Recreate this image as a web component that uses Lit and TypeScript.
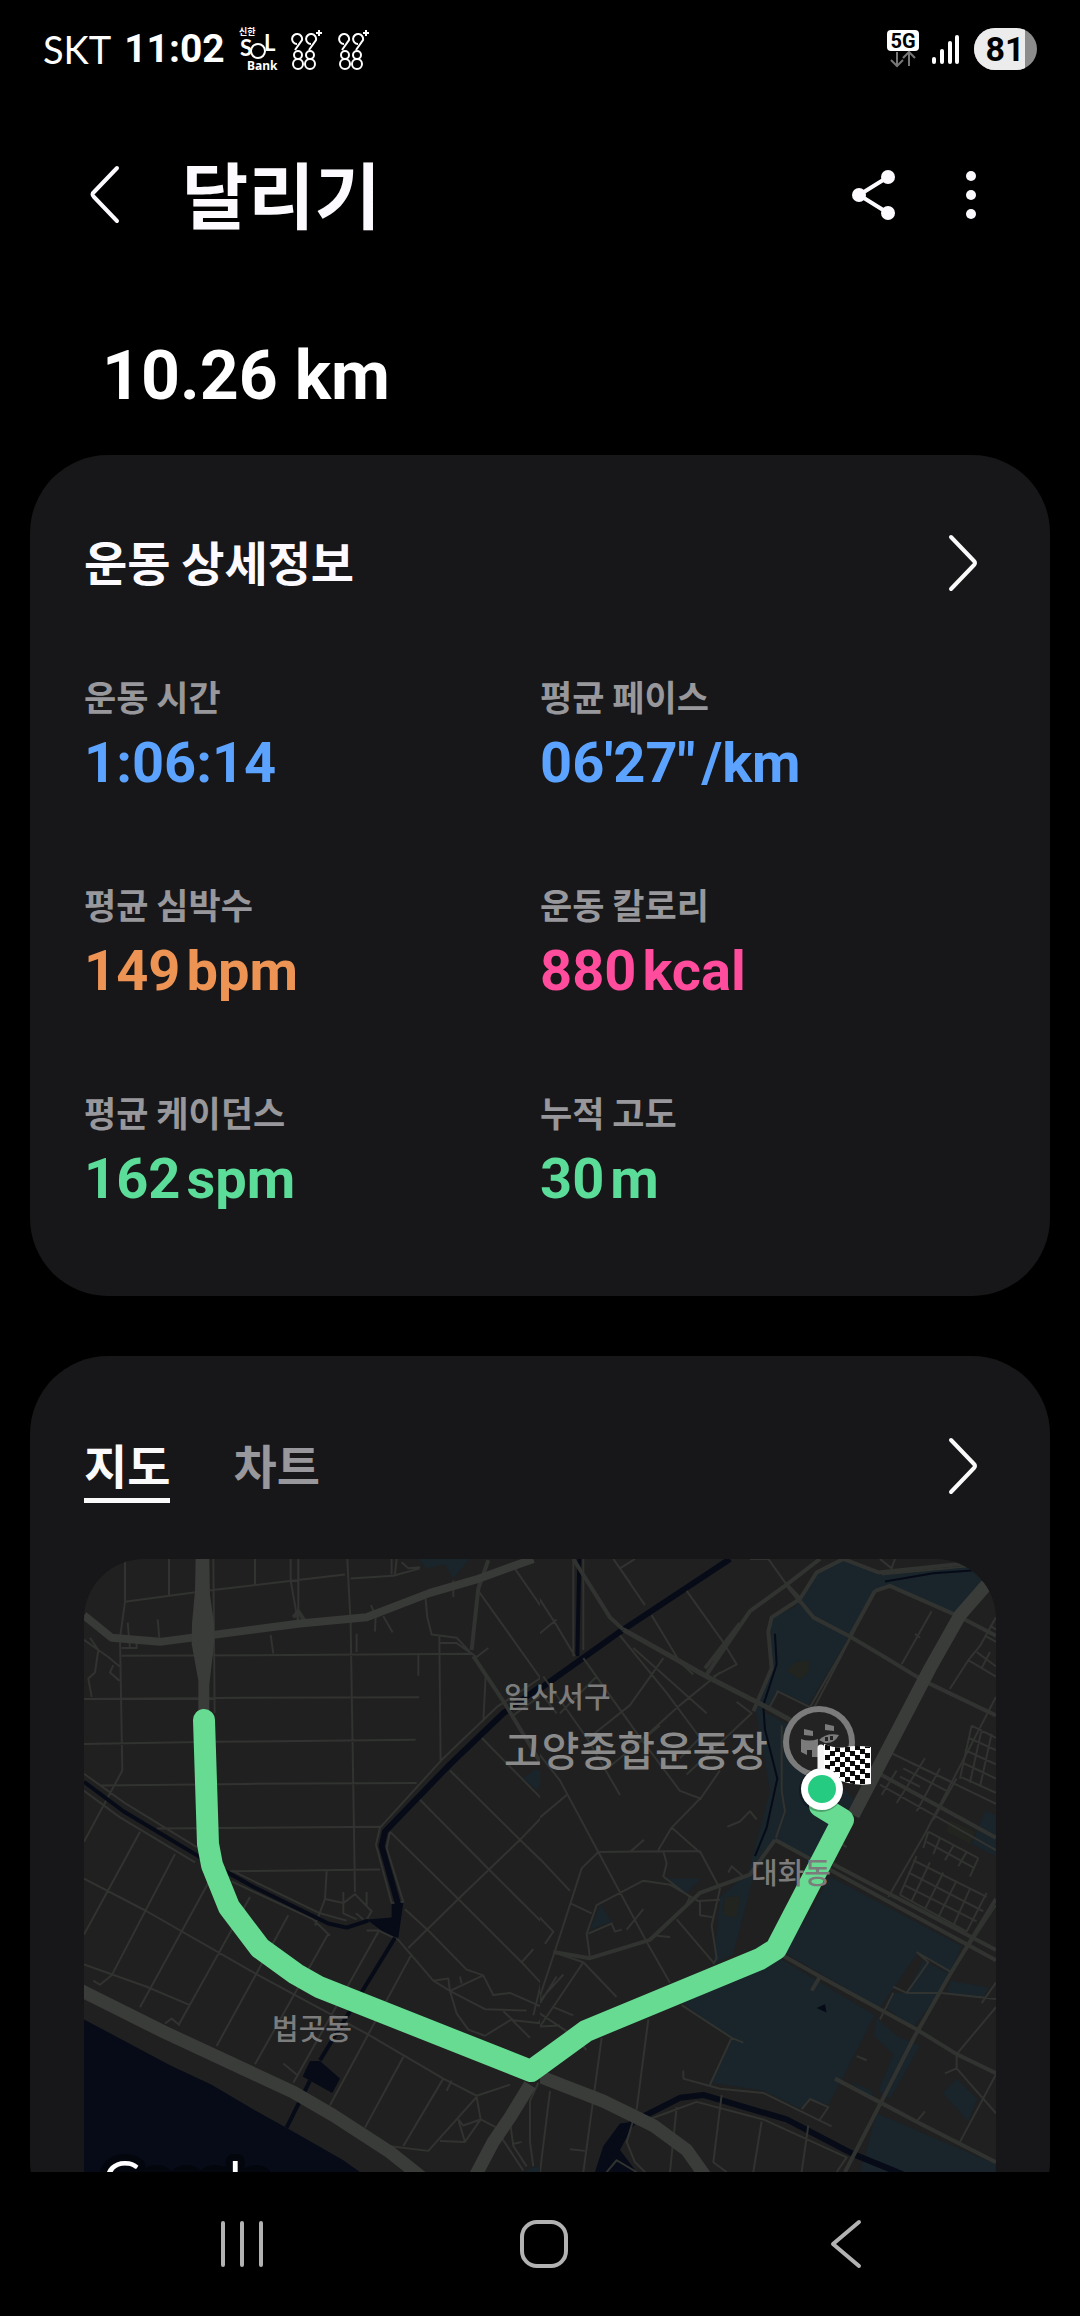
import { LitElement, html, css, svg } from "lit";
import { customElement, property, state } from "lit/decorators.js";

interface Stat {
  label: string;
  value: string;
  unit: string;
  tone: string;
}

const STATS: Stat[] = [
  { label: "운동 시간", value: "1:06:14", unit: "", tone: "blue" },
  { label: "평균 페이스", value: "06'27\"", unit: "/km", tone: "blue" },
  { label: "평균 심박수", value: "149", unit: "bpm", tone: "orange" },
  { label: "운동 칼로리", value: "880", unit: "kcal", tone: "pink" },
  { label: "평균 케이던스", value: "162", unit: "spm", tone: "green" },
  { label: "누적 고도", value: "30", unit: "m", tone: "green" },
];

const chevronRight = html`<svg width="40" height="64" viewBox="0 0 40 64" fill="none" stroke="#fafafa" stroke-width="4" stroke-linecap="round" stroke-linejoin="round" aria-hidden="true">
  <path d="M8 6 L31 30 Q33 32 31 34 L8 58" />
</svg>`;

@customElement("status-bar")
class StatusBar extends LitElement {
  static styles = css`
    :host { display: flex; align-items: center; justify-content: space-between; height: 98px; padding: 0 43px; color: #fff; }
    .side { display: flex; align-items: center; gap: 13px; }
    .right { gap: 12px; }
    .carrier { font: 400 38px/44px Lato, Roboto, sans-serif; }
    .time { font: 700 39px/44px Roboto, sans-serif; }
    .ko { font: 700 9px "Noto Sans CJK KR", sans-serif; }
    .s { font: 700 22px Lato, sans-serif; }
    .bank { font: 700 12px "Noto Sans", sans-serif; }
    .net { font: 700 20px Roboto, sans-serif; }
    .level { font: 700 34px Roboto, sans-serif; }
    svg { display: block; }
  `;

  private healthLogo() {
    return html`<svg width="34" height="44" viewBox="0 0 34 44" fill="none" stroke="#fff" stroke-width="2" role="img" aria-label="9988+">
      <path d="M6 17 A5 5 0 1 1 11 13 L4 23 M20 17 A5 5 0 1 1 25 13 L18 23" />
      <path d="M28 3 V9 M25 6 H31" />
      <circle cx="7" cy="28" r="4" /><circle cx="19" cy="28" r="4" />
      <circle cx="7" cy="37" r="5" /><circle cx="19" cy="37" r="5" />
    </svg>`;
  }

  render() {
    return html`
      <div class="side">
        <span class="carrier">SKT</span>
        <span class="time">11:02</span>
        <svg width="40" height="52" viewBox="0 -4 40 52" fill="#fff" role="img" aria-label="신한 SOL Bank">
          <text class="ko" x="1" y="8">신한</text>
          <text class="s" x="2" y="29">S</text>
          <circle cx="20" cy="24" r="7" fill="none" stroke="#fff" stroke-width="2" />
          <text class="s" x="26" y="24">L</text>
          <text class="bank" x="9" y="43">Bank</text>
        </svg>
        ${this.healthLogo()}${this.healthLogo()}
      </div>
      <div class="side right">
        <svg width="34" height="44" viewBox="0 0 34 44" role="img" aria-label="5G">
          <rect x="1" y="3" width="32" height="21" rx="4" fill="#fff" />
          <text class="net" x="17" y="21" text-anchor="middle" fill="#000">5G</text>
          <path d="M11 25 V38 M5 33 L11 39 L17 33 M23 39 V26 M17 31 L23 25 L29 31" fill="none" stroke="#777" stroke-width="2" />
        </svg>
        <svg width="30" height="44" viewBox="0 0 30 44" fill="#fff" role="img" aria-label="signal">
          <rect x="0" y="30" width="4" height="7" rx="2" /><rect x="8" y="22" width="4" height="15" rx="2" />
          <rect x="16" y="14" width="4" height="23" rx="2" /><rect x="23" y="8" width="4" height="29" rx="2" />
        </svg>
        <svg width="63" height="42" viewBox="0 0 63 42" role="img" aria-label="81%">
          <clipPath id="pill"><rect width="63" height="42" rx="21" /></clipPath>
          <g clip-path="url(#pill)">
            <rect width="63" height="42" fill="#8c8c8c" /><rect width="51" height="42" fill="#ececec" />
          </g>
          <text class="level" x="31" y="33" text-anchor="middle" fill="#000">81</text>
        </svg>
      </div>`;
  }
}

/* Strokes are grouped by width so that each group is one path. Both halves of
   the map share one vertical scale and overlap in the middle. */
const WEST = {
  park: "M1015 22 H1170 L1120 70 L1095 35 L1040 45Z M1330 560 L1370 535 L1400 555 L1370 588Z M1330 1524 L1360 1512 H1410 L1440 1524Z",
  sea: "M12 1150 L270 1262 L395 1310 L530 1375 L630 1420 L790 1495 L840 1524 V1700 H12Z M690 1252 H720 L780 1295 L757 1330 L668 1290Z M860 905 L935 900 L935 865 L970 865 L955 950 L925 945Z",
  thin: `M135 22 V127 L120 215 L127 540 L12 715 M135 127 L380 100 L660 73 L795 60 M812 70 L940 63 L1020 45 M267 22 V110 M525 22 V85 M632 22 V75 L655 180
    M655 22 V180 M802 22 L812 180 L825 838 M400 22 L404 400 M125 259 L520 258 L1180 254 M12 365 L500 362 L1017 361 M12 475 L400 470 L1007 465
    M60 577 L500 573 L1010 571 M230 682 L900 678 M450 787 L900 783 M1015 258 V308 M1078 210 L1082 520 M1037 120 L1042 165 L1055 207 L1130 215 L1170 250
    M1078 228 L1130 228 L1190 262 L1225 240 M1195 100 L1380 312 M1300 40 L1440 205 M1217 310 L1210 420 M143 178 L150 240 M233 170 L238 215 M125 240 H170 V225
    M572 208 L580 254 M830 205 V250 M873 135 L887 160 L885 200 M910 162 L938 202 M935 22 V60 M950 22 L945 60 M965 30 L985 45 L1020 42 M1120 75 V115
    M12 220 L55 245 L45 300 L25 315 L35 360 M55 245 L30 215 M55 245 L85 262 L118 285 M100 282 L90 300 L118 320
    M180 690 L12 942 M285 745 L95 1042 L60 1065 L40 1055 M385 815 L180 1120 M510 850 L295 1165 M625 895 L410 1215 M745 940 L525 1260 M895 935 L640 1305
    M995 990 L750 1360 M970 1242 L855 1415 M1090 1295 L970 1460 M12 805 L200 885 L520 1035 L860 1185 L1090 1295 L1190 1337 L1290 1310
    M12 1015 L200 1070 L330 1115 M255 1160 L275 1148 L300 1165 M610 1258 L650 1285 M1115 1300 L1100 1325
    M860 932 H895 L955 955 L1060 1055 L1110 1080 L1215 1125 L1340 1128 M1060 1055 L1105 1050 L1110 1080 L1130 1135 L1165 1175 L1215 1190 L1295 1150 L1350 1195
    M930 690 L1135 855 L1325 1010 L1440 1110 M1020 612 L1230 785 L1420 940 L1360 1140 M1110 540 L1320 710 L1440 805 M1205 460 L1440 655
    M985 975 L1135 855 L1320 710 L1440 608 M975 880 L1045 932 L1160 1028 L1210 1042 L1240 1090 L1290 1085 L1360 1110 L1440 1140 M1110 1080 L1210 1042
    M1325 1010 L1360 978 M1395 965 L1420 940 M1140 1045 L1145 1062 M1270 1130 L1300 1152 L1440 1165 M1375 1160 L1425 1100
    M740 787 L735 855 L705 920 M735 855 L790 865 L825 843 L875 885 L860 905 M790 838 V890 L830 905 M860 838 V870 M828 890 L850 905
    M1190 1340 L1045 1472 L925 1460 M1190 1340 L1202 1395 L1155 1450 L1080 1448 M1135 1395 L1155 1450 M1135 1395 L1150 1410 L1202 1395 L1250 1415
    M1375 1305 L1350 1350 V1450 L1360 1510 M1410 1325 L1385 1510 M1265 1440 L1330 1520 M1290 1400 L1300 1460 L1340 1510 M1300 1455 L1325 1450 M1390 1452 H1405
    M12 590 L120 655 L345 765 M12 548 L135 620 L350 728 M455 812 L700 905 L750 945 M455 785 L720 890 L800 908
    M1440 282 L1250 385 L1090 510 L900 680 L888 722 L935 865 L970 862 L920 730 L930 690 M1440 322 L1300 405`,
  road: "M1225 25 L1195 95 L1175 245 M1180 260 L1270 370 L1440 600 M640 165 L655 150 L675 175",
  wide: "M12 160 L95 215 L240 225 L400 208 L660 180 L860 165 L1050 105 L1190 72 L1360 22",
  highway: "M0 1078 L250 1180 L640 1328 L760 1385 L930 1475 L1030 1540 M1350 1310 L1290 1390 L1240 1450 L1175 1550",
  canal: "M12 568 L130 640 L355 750 L520 825 L745 915 L800 925 L865 908 M945 950 L720 1250 M690 1300 L620 1415",
  river: "M1440 300 L1270 400 L1110 525 L915 690 L905 725 L955 870",
};

const EAST = {
  park: `M840 120 L890 55 L970 25 L1075 60 L1250 50 L1350 35 L1400 90 L1310 160 L1110 90 L1065 100 L1040 130 L990 210 L865 380 L775 345 L735 395 L700 385 L750 290 L755 165 L825 140Z
    M705 385 L810 430 L1010 620 L930 660 L925 780 L765 710 L700 800 L640 990 L580 1015 L600 850 L685 790 L750 590 L725 470Z
    M930 800 L1325 970 L1290 1040 L1195 985 L1080 1122 L790 985 L860 900Z M490 1110 L780 1000 L1065 1140 L925 1360 L870 1345 L840 1368 L730 1325 L575 1305 L635 1200Z
    M1070 1380 L1428 1505 V1700 H960Z M1210 1005 L1290 1040 L1255 1090 L1180 1170 L1095 1120 L1125 1085 H1160Z M1290 1055 L1408 1072 L1390 1095 L1280 1088Z
    M1310 1295 L1372 1345 L1345 1400 L1268 1330Z M1070 1145 L1130 1190 L1200 1215 L1110 1345 L1075 1325 L1120 1235 L1062 1190Z M985 1300 L1055 1325 L1065 1350Z
    M440 805 L545 805 L500 840Z M240 868 L275 910 L210 930Z M1395 640 L1428 650 V750 L1355 720Z`,
  earth: "M800 295 L825 275 L870 270 L865 300 L840 318Z M615 850 L660 848 L650 900 L608 895Z M1285 660 L1365 690 L1350 720 L1280 690Z",
  thin: `M300 45 L345 22 M280 22 L375 135 M395 160 L480 275 L520 305 M500 100 L605 220 L650 280 L580 310 M690 22 L745 22 L800 85 M330 80 L280 22
    M0 45 L110 185 L165 260 M0 285 L110 400 M70 310 L200 460 L300 600 M190 265 L365 465 L480 590 L545 610 M300 210 L440 350 L540 460 L480 510 M340 240 L560 400
    M200 465 L330 380 L430 265 M120 400 L230 310 M365 465 L480 380 L600 300 M270 530 L420 430 M110 170 L0 245 M160 22 V260 M190 22 V245
    M0 440 L120 565 L235 740 L380 960 L450 1060 M0 705 L60 655 L140 600 M0 850 L100 935 L75 965 M0 705 L150 835
    M235 740 L430 738 L440 768 L430 800 L510 850 L495 875 M235 740 L185 780 L130 920 L45 1130 M150 865 L215 890 M210 1000 L200 940 L230 870 L370 810 L450 820 L535 860 L600 857
    M415 735 L455 680 L545 605 L600 540 M430 738 L540 738 L600 830 L575 920 L590 1000 L580 1015 M455 680 L545 745 M470 905 L580 1010 M540 860 V895 L580 900
    M190 1010 L290 1095 M190 1010 L0 1240 M100 985 L190 1010 M205 940 L275 915 L285 935 L305 930 M320 930 L370 880 M410 945 L450 948 M330 740 L372 710 M622 678 L660 665 L690 640 L710 660
    M650 372 L695 400 L500 550 M625 790 L635 775 L670 800 M385 1150 L350 1370 M245 1195 L190 1524 M90 1325 L60 1524 M30 1340 L45 1500 M470 1365 L450 1524
    M605 1335 L580 1500 L620 1524 M725 1400 L700 1524 M865 1410 L845 1524 M370 1400 L530 1352 L730 1395 L980 1488 L950 1524 M350 1370 L320 1450 L345 1500 L420 1560 M260 1524 L290 1495 L350 1524
    M485 1115 L635 1195 L670 1207 M570 1310 L635 1195 M490 1275 V1295 L600 1320 L730 1330 L935 1412 M845 1370 L870 1345 L925 1365 L900 1395
    M30 1130 L130 1040 M60 1110 L110 1045 M50 1130 L160 1190 L200 1225 M0 1170 L120 1165 M100 1120 L160 1140 M150 1468 L195 1472
    M1145 280 L1235 150 M1185 205 L1200 215 M1080 22 L1115 45 L1125 22 M1085 60 L1370 38 M1290 340 L1345 270 L1428 310 M1380 235 L1428 165 M1370 250 L1428 285 M1395 210 L1428 225 M1410 185 L1428 195
    M1345 270 L1380 235 M1385 290 L1410 250 M1428 360 L1215 695 L1105 850 M1095 490 L1428 622 M1080 575 L1428 735 M1085 600 L1130 540 M1130 620 L1215 510 M1190 640 L1260 535 M1240 660 L1310 560
    M770 345 L870 385 M775 345 L745 390 M870 385 L990 215 M880 390 L1005 195 M785 430 V590 L795 640 L768 705 M1190 985 L1290 1032 M1190 985 L1225 1010 L1160 1085 H1265 L1428 1100 M1120 1070 L1160 1085
    M1120 1085 L1080 1150 M1385 1110 L1428 1060 M1310 1235 L1428 1120 M1310 1235 V1270 L1428 1380 M1275 1282 L1310 1270 M1428 1285 L1320 1450 M1190 1400 L1215 1375 M1010 1240 L1040 1250
    M1428 870 L1290 1040 M965 720 L980 728`,
  blocks: `M1355 430 L1428 460 M1345 460 L1428 490 M1335 490 L1428 525 M1325 520 L1428 560 M1320 555 L1428 595 M1355 430 L1320 560 M1385 440 L1350 570 M1415 450 L1380 580
    M1225 690 L1375 755 M1220 715 L1365 780 M1225 690 L1210 730 M1260 705 L1240 745 M1300 725 L1275 760 M1340 740 L1315 775 M1375 755 L1350 800
    M1180 760 L1400 850 M1165 790 L1390 885 M1150 820 L1370 910 M1140 845 L1340 935 M1190 750 L1140 845 M1230 765 L1175 860 M1270 790 L1215 880 M1310 810 L1255 900 M1350 830 L1300 920 M1400 840 L1340 935
    M1140 555 L1200 580 M1150 535 L1280 590 M1170 520 L1300 570`,
  road: `M160 22 L270 165 L310 195 M560 305 L690 150 L800 85 L900 22 M555 290 L660 180 M800 85 L880 165 L990 212 L1100 265 L1210 320 L1428 405 M840 120 L800 85 M840 120 L890 55 L970 22 L1075 55 L1370 30
    M840 120 L755 165 L745 200 L755 290 L700 395 M100 985 L210 1000 L390 955 L540 840 L690 795 L765 710 M1428 855 L1290 1040 L1185 1190 L1085 1350 L975 1524
    M945 1295 L1085 1355 L1200 1405 L1428 1500 M780 990 L900 1045 L1185 1172 L1310 1235 L1428 1282 M875 1080 L900 1045 M1310 160 L1428 210 M1065 100 L1110 88 L1310 160 M1065 100 L990 212 M1060 540 L1428 705 M765 710 L1428 1005 M940 770 L1428 980`,
  wide: "M310 195 L560 310 L740 385 L830 425",
  highway: "M1400 85 L1320 160 L1230 290 L1000 650 M60 1290 L250 1350 L400 1410 L500 1470 L570 1550",
  canal: "M178 22 L172 260",
  brook: "M765 205 L770 280 L730 380 L735 440 L772 560 L740 680 L705 750 M1095 77 L1240 57 L1355 50",
  river: "M630 22 L300 200 L60 340 L0 370 M270 1524 L290 1450 L340 1400 L480 1342 L550 1335 L800 1395 L1000 1480 L1150 1530",
  lake: "M300 1405 L345 1400 L300 1470 L350 1524 H225 L250 1460Z M890 1122 L915 1113 L920 1133Z",
};

@customElement("route-map")
class RouteMap extends LitElement {
  static styles = css`
    :host { display: block; overflow: hidden; border-radius: 60px 60px 0 0; background: #202020; }
    svg { display: block; width: 100%; height: auto; }
    .net path { vector-effect: non-scaling-stroke; }
    .line { fill: none; stroke: #313330; stroke-linejoin: round; }
    .thin { stroke-width: 2; }
    .road { stroke-width: 4; }
    .wide { stroke: #383a37; stroke-width: 8; }
    .avenue { stroke-width: 5; }
    .highway { stroke: #3a3c39; stroke-width: 13; }
    .canal { stroke: #060b17; stroke-width: 4; }
    .brook { stroke: #060b17; stroke-width: 2; }
    .river { stroke: #060b17; stroke-width: 6; }
    .park { fill: #19242b; }
    .earth { fill: #21241f; }
    .sea { fill: #060b17; }
    .route { fill: none; stroke: #66db91; stroke-width: 22; stroke-linecap: round; stroke-linejoin: round; }
    .place { fill: #7c7c7c; font: 500 29px "Noto Sans CJK KR", sans-serif; }
    .poi { fill: #8a8a8a; font-size: 41px; }
    .brand { fill: #fff; stroke: #03060d; stroke-width: 14; stroke-linejoin: round; paint-order: stroke; font: 400 53px Lato, sans-serif; }
  `;

  private flag() {
    const cells = [];
    for (let row = 0; row < 8; row++) {
      for (let col = 0; col < 9; col++) {
        if ((row + col) % 2 === 0) {
          const sag = Math.round(Math.sin(col / 2) * 2) + 1;
          cells.push(svg`<rect x=${741 + col * 5} y=${185 + row * 5 + sag} width="5" height="5" />`);
        }
      }
    }
    return svg`<path d="M740 185 Q752 190 762 188 T787 188 V225 Q776 227 764 224 T740 214Z" fill="#fff" />
      <g fill="#0a0a0a" clip-path="url(#flag)">${cells}</g>`;
  }

  render() {
    return html`<svg viewBox="0 0 912 680" role="img" aria-label="경로 지도">
      <clipPath id="flag"><path d="M740 185 Q752 190 762 188 T787 188 V225 Q776 227 764 224 T740 214Z" /></clipPath>
      <clipPath id="west"><rect x="0" y="0" width="456" height="680" /></clipPath>
      <clipPath id="east"><rect x="456" y="0" width="456" height="680" /></clipPath>
      <g clip-path="url(#west)"><g class="net" transform="translate(-4 -9) scale(0.3333 0.4082)">
        <path class="park" d=${WEST.park} /><path class="sea" d=${WEST.sea} />
        <path class="line thin" d=${WEST.thin} /><path class="line canal" d=${WEST.canal} /><path class="line river" d=${WEST.river} />
        <path class="line road" d=${WEST.road} /><path class="line wide" d=${WEST.wide} /><path class="line highway" d=${WEST.highway} />
        <path d="M347 22 H388 L390 110 L402 180 V230 L388 330 V410 H355 V320 L335 230 L336 180 L345 100Z" fill="#3a3c39" />
      </g></g>
      <g clip-path="url(#east)"><g class="net" transform="translate(436 -9) scale(0.3333 0.4082)">
        <path class="park" d=${EAST.park} /><path class="earth" d=${EAST.earth} /><path class="sea" d=${EAST.lake} />
        <path class="line canal" d=${EAST.canal} /><path class="line brook" d=${EAST.brook} /><path class="line river" d=${EAST.river} />
        <path class="line thin" d=${EAST.thin} /><path class="line thin" d=${EAST.blocks} />
        <path class="line road" d=${EAST.road} /><path class="line avenue" d=${EAST.wide} /><path class="line highway" d=${EAST.highway} />
      </g></g>
      <g fill="#7b7b7b">
        <path d="M699 183 a36 36 0 1 1 72 0 q0 22 -20 34 h-28 q-24 -12 -24 -34Z" />
        <circle cx="735" cy="183" r="30" fill="#232323" />
        <path d="M720 170 l9 2 v5 l-9 -1Z M741 165 l9 2 v5 l-9 -1Z M717 180 q8 3 17 0 v18 h-6 v-7 h-5 v5 l-6 -3Z" />
        <path d="M735 181 q8 -8 20 -5 q-5 9 -14 8 Z" />
        <path d="M741 178 h3 v4 h-3Z M746 177 h3 v4 h-3Z" fill="#232323" />
      </g>
      <path class="route" d="M120 161 L124 285 L128 306 L145 348 L176 389 L212 415 L235 428 L447 512 L502 472 L676 400 L692 390 L759 261 L736 247" />
      <path d="M737 189 V220" stroke="#f4f4f4" stroke-width="7" stroke-linecap="round" />
      ${this.flag()}
      <circle cx="737" cy="231" r="22" fill="#000" opacity="0.25" />
      <circle cx="738" cy="230" r="21" fill="#fff" /><circle cx="738" cy="230" r="14" fill="#25cb81" />
      <text class="place" x="420" y="149">일산서구</text>
      <text class="place poi" x="420" y="207">고양종합운동장</text>
      <text class="place" x="188" y="481">법곳동</text>
      <text class="place" x="667" y="325">대화동</text>
      <text class="brand" x="19" y="640">Google</text>
    </svg>`;
  }
}

@customElement("stat-item")
class StatItem extends LitElement {
  @property({ attribute: false }) stat!: Stat;

  static styles = css`
    :host { display: block; }
    dl { margin: 0; }
    dt { color: #98979b; font: 700 35px/46px "Noto Sans CJK KR", sans-serif; }
    dd { display: flex; gap: 6px; margin: 0; font: 700 56px/88px Roboto, sans-serif; }
    .blue { color: #5ca3ff; }
    .orange { color: #ed9455; }
    .pink { color: #ff4c9c; }
    .green { color: #5bdc98; }
  `;

  render() {
    const { label, value, unit, tone } = this.stat;
    return html`<dl>
      <dt>${label}</dt>
      <dd class=${tone}><span>${value}</span>${unit ? html`<span>${unit}</span>` : ""}</dd>
    </dl>`;
  }
}

@customElement("app-root")
class AppRoot extends LitElement {
  @state() private tab = "지도";

  static styles = css`
    :host { display: flex; flex-direction: column; height: 100vh; overflow: hidden; background: #000; color: #fcfaff; font-family: Roboto, "Noto Sans CJK KR", sans-serif; }
    * { box-sizing: border-box; }
    button { display: flex; align-items: center; justify-content: center; margin: 0; padding: 0; border: 0; background: none; color: inherit; cursor: pointer; }
    svg { display: block; }
    status-bar { flex: none; }
    main { flex: 1; min-height: 0; overflow: hidden; }
    .bar { display: flex; align-items: center; height: 194px; padding: 0 77px 0 71px; }
    .bar h1 { flex: 1; margin: 0 0 0 47px; padding-bottom: 6px; font: 700 72px/100px "Noto Sans CJK KR", sans-serif; }
    .icon { width: 64px; height: 72px; }
    .more { margin-left: 34px; }
    .distance { margin: 42px 0 37px; padding: 0 102px; font: 700 68px/84px Roboto, sans-serif; color: #fff; }
    .card { margin: 0 30px; padding: 0 54px; border-radius: 78px; background: #171719; }
    .details { padding-top: 78px; padding-bottom: 73px; }
    .head { display: flex; align-items: center; justify-content: space-between; height: 60px; }
    .head h2 { margin: 0; padding-bottom: 4px; font: 700 47px/56px "Noto Sans CJK KR", sans-serif; }
    .go { margin-right: 13px; }
    .stats { display: grid; grid-template-columns: 1fr 1fr; row-gap: 74px; margin-top: 80px; }
    .track { margin-top: 60px; padding-top: 73px; }
    .track .head { height: 74px; margin-bottom: 56px; }
    .tabs { display: flex; gap: 63px; height: 74px; }
    .tab { border-bottom: 5px solid transparent; color: #98979b; font: 700 47px/60px "Noto Sans CJK KR", sans-serif; }
    .tab[aria-selected="true"] { border-color: #fafafa; color: #fafafa; }
    nav { flex: none; display: flex; align-items: center; justify-content: space-between; height: 144px; padding: 0 204px 0 212px; background: #000; }
    nav button { width: 60px; height: 60px; }
  `;

  private renderTab(name: string) {
    return html`<button class="tab" role="tab" aria-selected=${this.tab === name ? "true" : "false"} @click=${() => (this.tab = name)}>${name}</button>`;
  }

  render() {
    return html`
      <status-bar></status-bar>
      <main>
        <header class="bar">
          <button class="icon" aria-label="뒤로">
            <svg width="64" height="72" viewBox="0 0 64 72" fill="none" stroke="#fcfaff" stroke-width="4" stroke-linecap="round" stroke-linejoin="round"><path d="M46 9 L23 33 Q20 35 23 38 L46 62" /></svg>
          </button>
          <h1>달리기</h1>
          <button class="icon" aria-label="공유">
            <svg width="64" height="72" viewBox="0 0 64 72" fill="#fcfaff"><path d="M47 18 L18 36 L47 54" fill="none" stroke="#fcfaff" stroke-width="4" /><circle cx="47" cy="18" r="7" /><circle cx="18" cy="36" r="7" /><circle cx="47" cy="54" r="7" /></svg>
          </button>
          <button class="icon more" aria-label="더보기">
            <svg width="64" height="72" viewBox="0 0 64 72" fill="#fcfaff"><circle cx="32" cy="17" r="5" /><circle cx="32" cy="36" r="5" /><circle cx="32" cy="55" r="5" /></svg>
          </button>
        </header>
        <p class="distance">10.26 km</p>
        <section class="card details">
          <div class="head">
            <h2>운동 상세정보</h2>
            <button class="go" aria-label="운동 상세정보 보기">${chevronRight}</button>
          </div>
          <div class="stats">${STATS.map((s) => html`<stat-item .stat=${s}></stat-item>`)}</div>
        </section>
        <section class="card track">
          <div class="head">
            <div class="tabs" role="tablist">${this.renderTab("지도")}${this.renderTab("차트")}</div>
            <button class="go" aria-label="지도 보기">${chevronRight}</button>
          </div>
          <route-map></route-map>
        </section>
      </main>
      <nav>
        <button aria-label="최근 앱">
          <svg width="60" height="60" viewBox="0 0 60 60" stroke="#b2b2b2" stroke-width="4" stroke-linecap="round"><path d="M11 9 V51 M30 9 V51 M49 9 V51" /></svg>
        </button>
        <button aria-label="홈">
          <svg width="60" height="60" viewBox="0 0 60 60" fill="none" stroke="#b2b2b2" stroke-width="4"><rect x="8" y="8" width="44" height="44" rx="15" /></svg>
        </button>
        <button aria-label="뒤로 가기">
          <svg width="60" height="60" viewBox="0 0 60 60" fill="none" stroke="#b2b2b2" stroke-width="4" stroke-linecap="round" stroke-linejoin="round"><path d="M43 8 L17 30 L43 52" /></svg>
        </button>
      </nav>`;
  }
}
